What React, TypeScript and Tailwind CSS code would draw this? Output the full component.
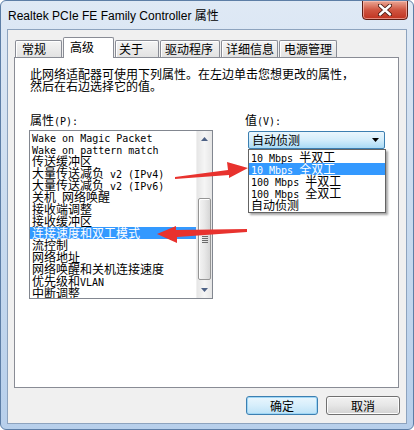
import React from "react";

const isAscii = (s: string) => /^[\x20-\x7e]+$/.test(s);

function SimText({ text }: { text: string }) {
  const parts = text.split(/([\x20-\x7e]+)/).filter((p) => p.length > 0);
  return (
    <>
      {parts.map((p, i) =>
        isAscii(p) ? (
          <span
            key={i}
            className="font-['DejaVu_Sans_Mono',monospace] text-[10px]"
          >
            {p}
          </span>
        ) : (
          <span key={i}>{p}</span>
        )
      )}
    </>
  );
}

const props = [
  "Wake on Magic Packet",
  "Wake on pattern match",
  "传送缓冲区",
  "大量传送减负 v2 (IPv4)",
  "大量传送减负 v2 (IPv6)",
  "关机 网络唤醒",
  "接收端调整",
  "接收缓冲区",
  "连接速度和双工模式",
  "流控制",
  "网络地址",
  "网络唤醒和关机连接速度",
  "优先级和VLAN",
  "中断调整",
];

const values = [
  "10 Mbps 半双工",
  "10 Mbps 全双工",
  "100 Mbps 半双工",
  "100 Mbps 全双工",
  "自动侦测",
];

type Tab = { label: string; w: string; pl: string; selected?: boolean };

function TabItem({ label, w, pl, selected }: Tab) {
  if (selected) {
    return (
      <div
        className={`${w} ${pl} h-[21px] mb-[-1px] bg-white border border-b-0 border-[#898c95] rounded-t-[2px] leading-[16px] pt-[1px] relative z-10`}
      >
        {label}
      </div>
    );
  }
  return (
    <div
      className={`${w} ${pl} h-[17px] border border-b-0 border-[#898c95] rounded-t-[2px] bg-gradient-to-b from-[#f4f4f4] to-[#e2e2e2] shadow-[inset_1px_1px_0_#ffffff] leading-[16px]`}
    >
      {label}
    </div>
  );
}

function UpArrow() {
  return (
    <svg width="7" height="4" viewBox="0 0 7 4">
      <path d="M0 4 L3.5 0 L7 4 Z" fill="#4d6185" />
    </svg>
  );
}

function DownArrow() {
  return (
    <svg width="7" height="4" viewBox="0 0 7 4">
      <path d="M0 0 L7 0 L3.5 4 Z" fill="#4d6185" />
    </svg>
  );
}

export default function App() {
  return (
    <div className="relative w-[414px] h-[430px] overflow-hidden rounded-[6px] border border-[#5d7ea6] bg-gradient-to-b from-[#dfe9f5] via-[#c9dbef] to-[#b7cfeb] flex flex-col text-[12px] text-black font-['Noto_Sans_CJK_SC',sans-serif]">
      {/* Title bar */}
      <div className="relative h-[28px] shrink-0 flex items-center pl-[7px]">
        <span className="font-['Liberation_Sans','Noto_Sans_CJK_SC',sans-serif] text-[12px] leading-[14px] mt-[1px]">
          Realtek PCIe FE Family Controller 属性
        </span>
        <div className="absolute right-[5px] top-[-1px] w-[46px] h-[20px] rounded-b-[4px] border border-[#5b1d14] bg-gradient-to-b from-[#e9a796] via-[#cf5440] to-[#c0321f] shadow-[inset_0_0_0_1px_rgba(255,200,190,0.6)] flex items-center justify-center">
          <svg width="14" height="12" viewBox="0 0 14 12">
            <path
              d="M2 1.5 L12 10.5 M12 1.5 L2 10.5"
              stroke="#4a1a12"
              strokeWidth="4.2"
              strokeLinecap="round"
            />
            <path
              d="M2 1.5 L12 10.5 M12 1.5 L2 10.5"
              stroke="#ffffff"
              strokeWidth="2.4"
              strokeLinecap="round"
            />
          </svg>
        </div>
      </div>

      {/* Client area */}
      <div className="mx-[6px] h-[395px] shrink-0 border border-[#8da3be] bg-[#f0f0f0] flex flex-col">
        <div className="pt-[7px] pl-[6px] pr-[7px] flex flex-col">
          {/* Tabs */}
          <div className="flex items-end h-[20px] pl-[1px] gap-[1px]">
            <TabItem label="常规" w="w-[47px]" pl="pl-[6px]" />
            <TabItem label="高级" w="w-[51px]" pl="pl-[6px]" selected />
            <TabItem label="关于" w="w-[44px]" pl="pl-[3px]" />
            <TabItem label="驱动程序" w="w-[60px]" pl="pl-[4px]" />
            <TabItem label="详细信息" w="w-[57px]" pl="pl-[4px]" />
            <TabItem label="电源管理" w="w-[58px]" pl="pl-[4px]" />
          </div>

          {/* Panel */}
          <div className="h-[331px] border border-[#898c95] bg-white pt-[10px] pl-[15px] leading-[12px]">
            <div className="leading-[12px]">
              <div>此网络适配器可使用下列属性。在左边单击您想更改的属性，</div>
              <div>然后在右边选择它的值。</div>
            </div>

            <div className="flex mt-[22px] ml-[-1px]">
              {/* Left column */}
              <div className="w-[184px] flex flex-col">
                <div className="pl-[1px] h-[12px] leading-[12px] whitespace-pre">
                  <SimText text="属性(P):" />
                </div>
                <div className="mt-[4px] h-[169px] border border-[#828790] bg-white flex overflow-hidden">
                  <div className="flex-1 overflow-hidden">
                    {props.map((p, i) => (
                      <div
                        key={i}
                        className={`h-[12px] leading-[12px] pl-[2px] whitespace-pre ${
                          i === 8 ? "bg-[#3399ff] text-white" : ""
                        }`}
                      >
                        <SimText text={p} />
                      </div>
                    ))}
                  </div>
                  {/* Scrollbar */}
                  <div className="w-[16px] flex flex-col bg-gradient-to-r from-[#e6e6e6] via-[#f5f5f5] to-[#e6e6e6] border-l border-[#f0f0f0]">
                    <div className="h-[16px] flex items-center justify-center">
                      <UpArrow />
                    </div>
                    <div className="h-[51px]" />
                    <div className="h-[82px] mx-[1px] rounded-[2px] border border-[#959595] bg-gradient-to-r from-[#f4f4f4] via-[#e8e8e8] to-[#d6d6d6] shadow-[inset_1px_1px_0_#ffffff] flex flex-col items-center justify-center gap-[1px]">
                      <div className="w-[6px] h-[1px] bg-[#6a6a6a]" />
                      <div className="w-[6px] h-[1px] bg-[#6a6a6a]" />
                      <div className="w-[6px] h-[1px] bg-[#6a6a6a]" />
                      <div className="w-[6px] h-[1px] bg-[#6a6a6a]" />
                    </div>
                    <div className="flex-1" />
                    <div className="h-[16px] flex items-center justify-center">
                      <DownArrow />
                    </div>
                  </div>
                </div>
              </div>

              {/* Right column */}
              <div className="ml-[32px] flex flex-col">
                <div className="h-[12px] leading-[12px] whitespace-pre">
                  <SimText text="值(V):" />
                </div>
                <div className="relative ml-[3px] mt-[5px] w-[137px] h-[18px]">
                  <div className="w-full h-full rounded-[2px] border border-[#3c7fb1] bg-gradient-to-b from-[#eaf6fd] via-[#d3edfb] to-[#a9daf5] flex items-center pl-[3px] pr-[5px]">
                    <span className="leading-[14px]">自动侦测</span>
                    <svg className="ml-auto" width="7" height="4" viewBox="0 0 7 4">
                      <path d="M0 0 L7 0 L3.5 4 Z" fill="#000000" />
                    </svg>
                  </div>
                  <div className="absolute left-0 top-[18px] w-[138px] border border-[#646464] bg-white py-[1px] shadow-[2px_2px_2px_rgba(0,0,0,0.35)] z-20">
                    {values.map((v, i) => (
                      <div
                        key={i}
                        className={`h-[12px] leading-[12px] pl-[2px] whitespace-pre ${
                          i === 1 ? "bg-[#3399ff] text-white" : ""
                        }`}
                      >
                        <SimText text={v} />
                      </div>
                    ))}
                  </div>
                </div>
              </div>
            </div>
          </div>
        </div>

        {/* Buttons */}
        <div className="mt-[8px] flex justify-end gap-[8px] pr-[6px]">
          <button className="w-[72px] h-[19px] rounded-[3px] border border-[#3c7fb1] bg-gradient-to-b from-[#eaf6fd] via-[#d6eefb] to-[#bde2f7] shadow-[inset_0_0_0_1px_#9fd6f5] text-[12px] leading-[14px]">
            确定
          </button>
          <button className="w-[74px] h-[19px] rounded-[3px] border border-[#707070] bg-gradient-to-b from-[#f2f2f2] via-[#e6e6e6] to-[#d2d2d2] shadow-[inset_0_0_0_1px_#fcfcfc] text-[12px] leading-[14px]">
            取消
          </button>
        </div>
      </div>

      {/* Red arrows overlay */}
      <svg
        className="absolute left-[-1px] top-[-1px] pointer-events-none z-30"
        width="414"
        height="430"
        viewBox="0 0 414 430"
      >
        <polygon
          points="175,177 228,170 227,162 248,168 229,178 229,175 175,179"
          fill="#e8322e"
        />
        <polygon
          points="157,234 176,226 176,230 247,229 247,232 177,237 177,243"
          fill="#e8322e"
        />
      </svg>
    </div>
  );
}
